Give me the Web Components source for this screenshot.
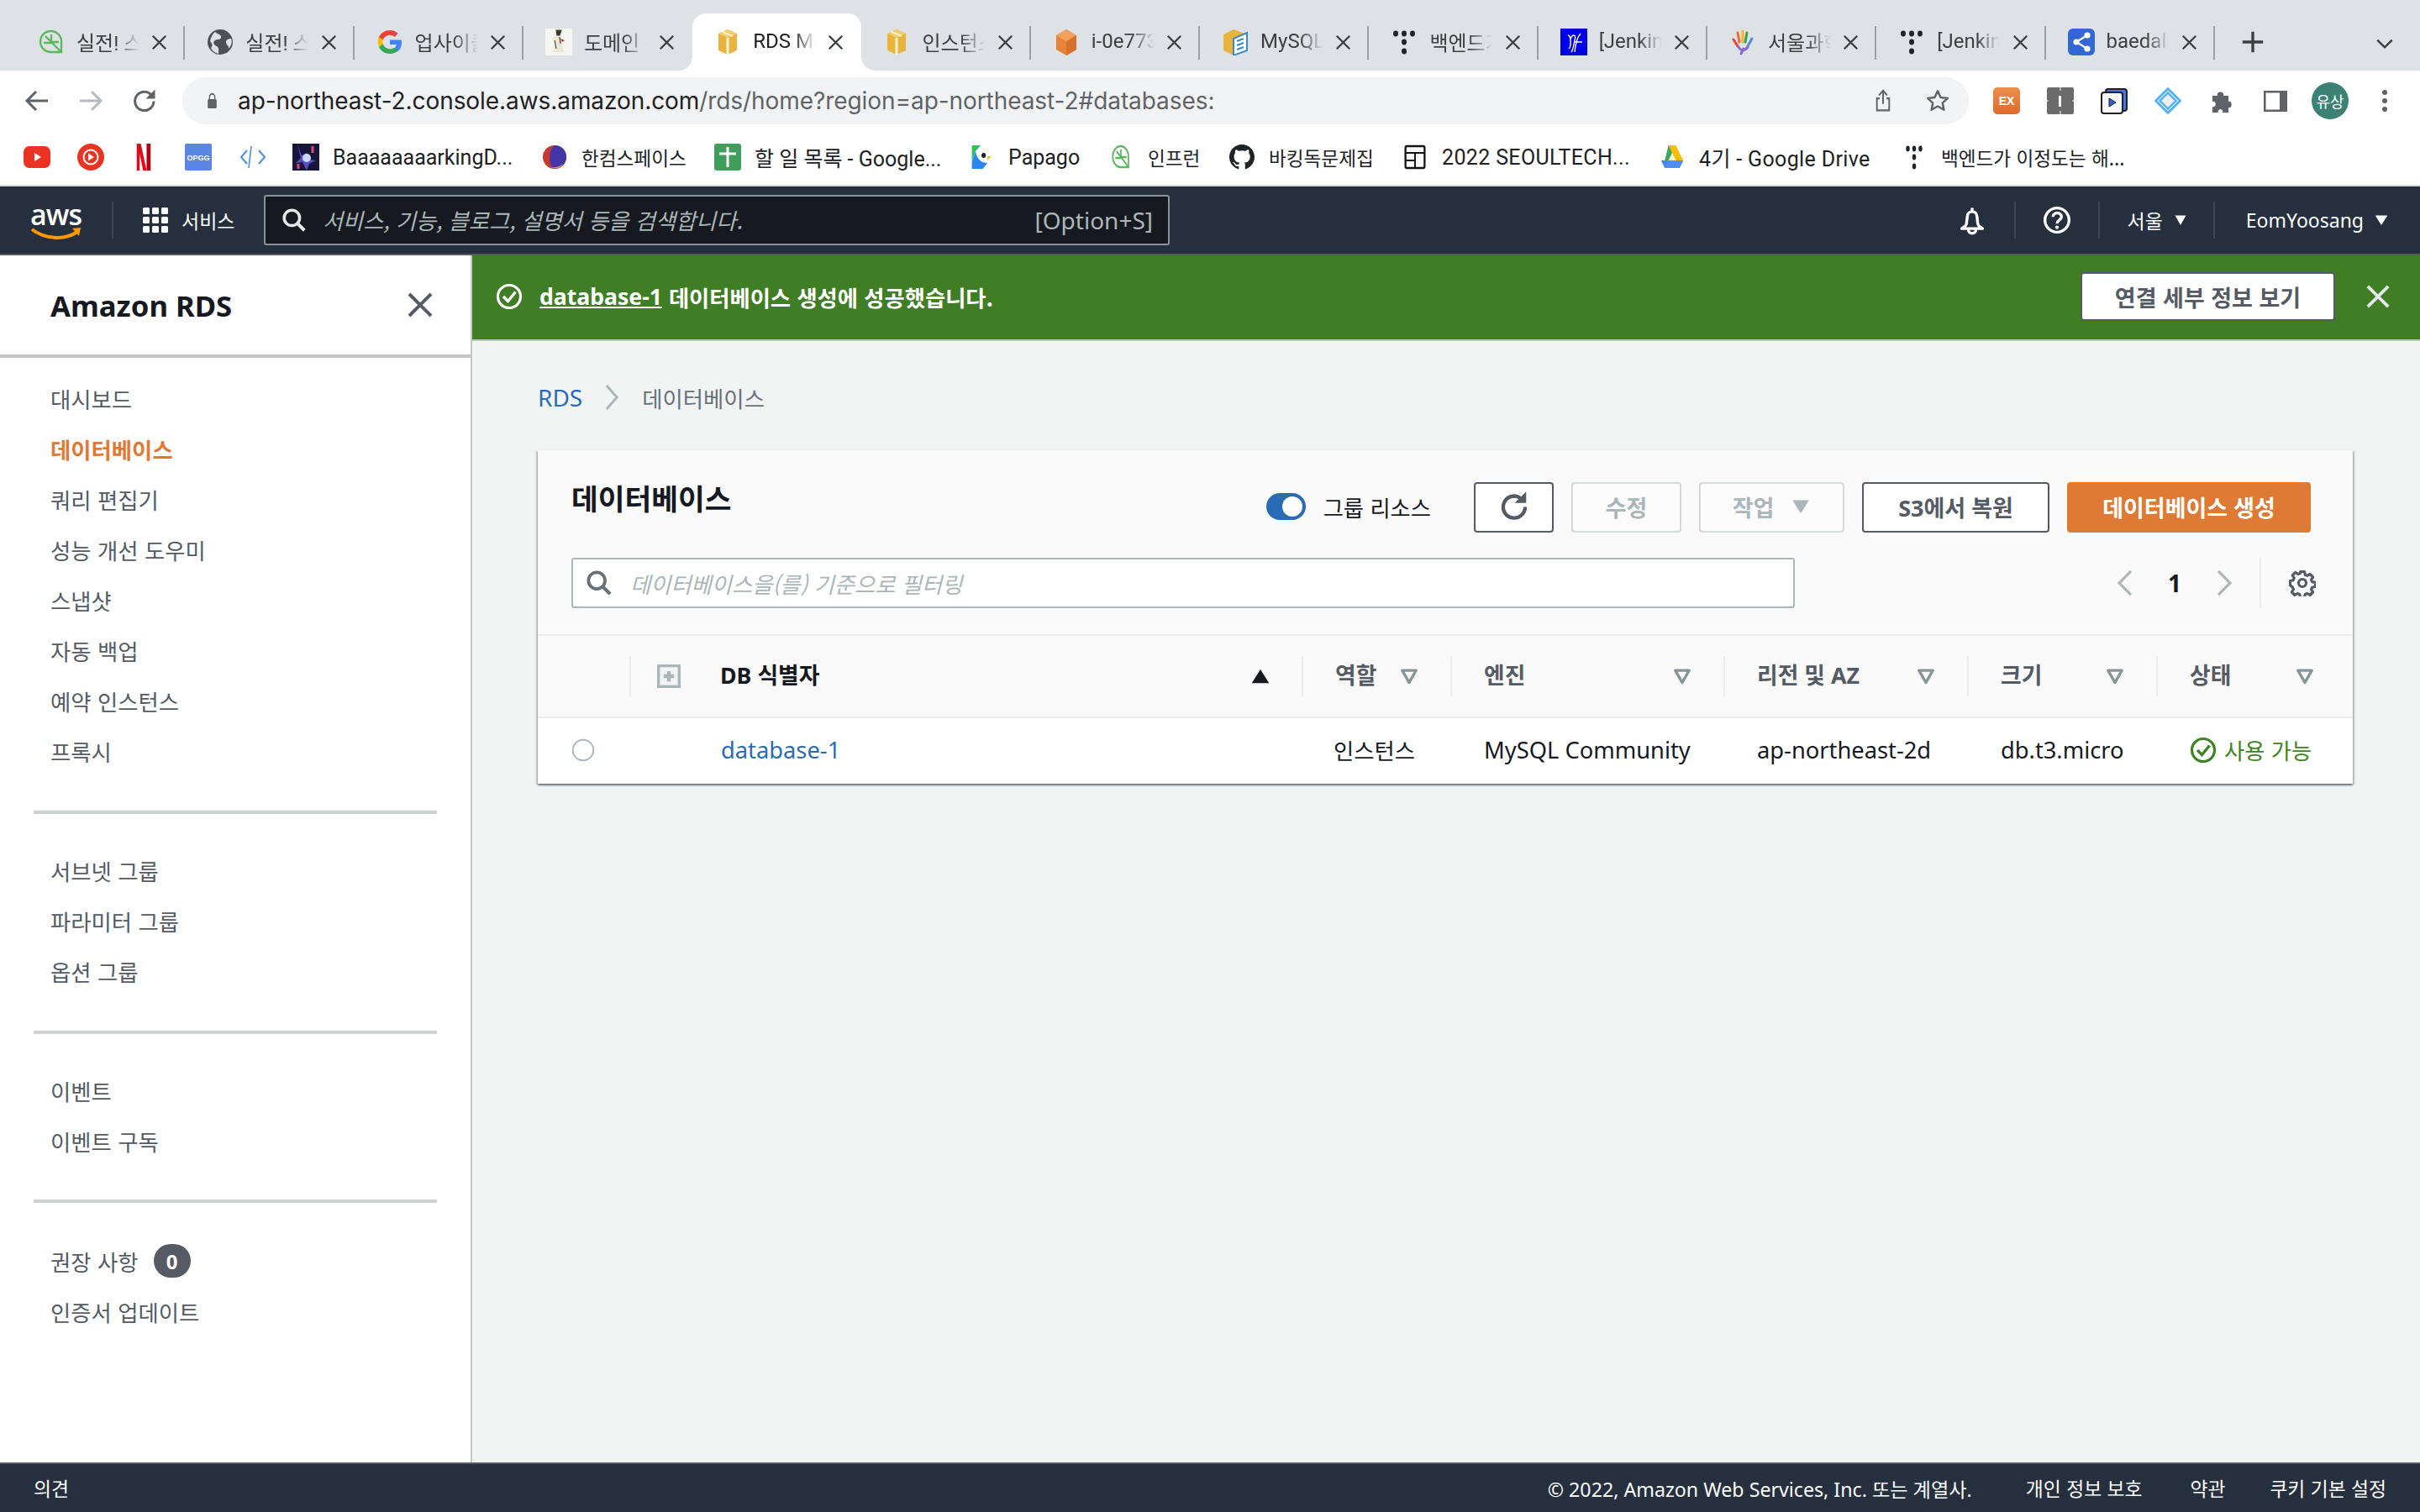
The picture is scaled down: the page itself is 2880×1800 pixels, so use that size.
<!DOCTYPE html>
<html lang="ko"><head><meta charset="utf-8"><title>RDS Management Console</title>
<style>
html,body{margin:0;padding:0;background:#f2f3f3}
body{width:2880px;height:1800px;overflow:hidden;display:flex;flex-direction:column;font-family:"Noto Sans","Noto Sans CJK KR",sans-serif;color:#16191f}
.body{display:flex;flex:1;min-height:0}
</style></head>
<body>
<chrome-tabs></chrome-tabs>
<chrome-toolbar></chrome-toolbar>
<bookmark-bar></bookmark-bar>
<aws-topnav></aws-topnav>
<div class="body">
  <side-nav></side-nav>
  <main-pane></main-pane>
</div>
<aws-footer></aws-footer>
<script>
const ICONS={
inflearn:'<g fill="none" stroke="#5cb85c" stroke-width="2.300"><path d="M28 28H16A12.500 12.500 0 1 1 28 16z"/><path d="M9 9l19 19M16 7v9M7 17h10M16 16h9"/></g>',
globe:'<circle cx="16" cy="16" r="15" fill="#4d5156"/><path d="M10 4c3 3 8 3 7 7-1 3-6 1-8 4-2 2 0 5 3 6 3 2 2 5 2 9-4-1-7-3-9-7 3-3 1-6-1-8 1-5 3-9 6-11zM29 12c-3 0-6 1-6 4 0 4 4 4 3 8 3-3 5-8 3-12z" fill="#dee1e6"/>',
g:'<path d="M30 16.400c0-1-.1-2-.3-2.900H16v5.500h7.900c-.3 1.800-1.400 3.400-2.900 4.400v3.600h4.700c2.800-2.600 4.300-6.300 4.300-10.600z" fill="#4285f4"/><path d="M16 30c3.900 0 7.200-1.300 9.700-3.500L21 22.900c-1.300.9-3 1.400-5 1.400-3.800 0-7-2.500-8.200-6H3v3.700C5.400 26.900 10.300 30 16 30z" fill="#34a853"/><path d="M7.800 18.300c-.6-1.800-.6-3.800 0-5.600V9H3C1.400 12.300 1.400 17 3 22z" fill="#fbbc05"/><path d="M16 7.700c2.100 0 4 .7 5.500 2.200l4.100-4.100C23.200 3.400 19.900 2 16 2 10.300 2 5.400 5.100 3 9.900l4.800 3.700C9 10.200 12.200 7.700 16 7.700z" fill="#ea4335"/>',
thumb:'<rect x="0" width="32" height="32" fill="#f7f5ef"/><path d="M15 3c3 0 4 3 2 5l2 4 4 2-4 1 1 8 3 5H9l3-6-1-8-3-2 5-3-1-3z" fill="#ece6d4"/><path d="M13 2h6l-2 6h-3zM11 14l2 10M17 10l1 8" stroke="#444" stroke-width="1.200" fill="#333"/><path d="M18 12l5 2-3 2z" fill="#b33"/>',
boxy:'<path d="M16 1 5 6v20l11 5 11-5V6z" fill="#e8b33e"/><path d="M5 6l11 5 11-5-11-5z" fill="#f2cc6e"/><path d="M16 11v20" stroke="#fff3cf" stroke-width="3"/><path d="M10 4l12 5" stroke="#fff3cf" stroke-width="2"/>',
boxo:'<path d="M16 1 4 8v17l12 7 12-7V8z" fill="#e8833a"/><path d="M4 8l12 7 12-7-12-7z" fill="#f0a25f"/><path d="M16 15v17l12-7V8z" fill="#d8702a"/>',
mysqlbox:'<path d="M14 1 2 7v19l12 6 4-2V10l10-4z" fill="#e8b33e"/><path d="M14 12l16-7v21l-16 6z" fill="#fff" stroke="#3a8dc9" stroke-width="2"/><path d="M18 15l8-3M18 20l8-3M18 25l8-3" stroke="#3a8dc9" stroke-width="2.400"/>',
dots:'<g fill="#1f2226"><ellipse cx="6" cy="6" rx="3" ry="3.400"/><ellipse cx="16" cy="6" rx="3" ry="3.400"/><ellipse cx="26" cy="6" rx="3" ry="3.400"/><ellipse cx="16" cy="16" rx="3" ry="3.400"/><ellipse cx="16" cy="27" rx="3" ry="3.400"/></g>',
jenk:'<rect width="32" height="32" fill="#0000e6"/><path d="M9 8c4 0 4 14 1 16M12 12c3-6 7-5 5 2-1 5-2 12-4 14M24 6c-4 4-6 12-7 22M16 16h10" fill="none" stroke="#fff" stroke-width="1.400"/>',
hand:'<g fill="none" stroke-width="3" stroke-linecap="round"><path d="M16 3v13" stroke="#f2b632"/><path d="M21 5l-2 11" stroke="#43a047"/><path d="M10 5l2 11" stroke="#ef6c3a"/><path d="M5 13l5 8" stroke="#ea4335"/><path d="M27 12l-5 9" stroke="#4a90d9"/><path d="M11 22c3 5 7 5 11 0" stroke="#8e6ad8"/><path d="M14 30l3-6" stroke="#8e6ad8"/></g>',
share:'<rect width="32" height="32" rx="6" fill="#3367d6"/><g fill="#fff"><circle cx="23" cy="8" r="3.600"/><circle cx="10" cy="16" r="3.600"/><circle cx="23" cy="24" r="3.600"/></g><path d="M23 8 10 16l13 8" stroke="#fff" stroke-width="2.200" fill="none"/>',
back:'<path d="M29 16H5M15 5 4 16l11 11" fill="none" stroke="currentColor" stroke-width="3"/>',
fwd:'<path d="M3 16h24M17 5l11 11-11 11" fill="none" stroke="currentColor" stroke-width="3"/>',
reload:'<path d="M27 16.500A11.200 11.200 0 1 1 23 7.800L27 12" fill="none" stroke="currentColor" stroke-width="3"/><path d="M28.500 2.500v11h-11z" fill="currentColor"/>',
lock:'<path d="M10 14v-4a6 6 0 0 1 12 0v4" fill="none" stroke="currentColor" stroke-width="2.600"/><rect x="6" y="13" width="20" height="16" rx="2.500" fill="currentColor"/>',
upload:'<path d="M16 20V4M10 9l6-6 6 6" fill="none" stroke="currentColor" stroke-width="2.400"/><path d="M11 13H7v15h18V13h-4" fill="none" stroke="currentColor" stroke-width="2.400"/>',
star:'<path d="M16 3.500l3.800 8.200 8.900 1-6.600 6 1.800 8.800-7.900-4.500-7.900 4.500 1.800-8.800-6.600-6 8.900-1z" fill="none" stroke="currentColor" stroke-width="2.600" stroke-linejoin="round"/>',
ex:'<defs><linearGradient id="exg" x1="0" y1="0" x2="0" y2="1"><stop offset="0" stop-color="#ec8f4d"/><stop offset="1" stop-color="#df6a2b"/></linearGradient></defs><rect width="32" height="32" rx="5" fill="url(#exg)"/><text x="16" y="21" font-family="Liberation Sans" font-size="14" font-weight="700" fill="#fff" text-anchor="middle">EX</text>',
grey:'<rect width="32" height="32" rx="2" fill="#6b6b6b"/><path d="M16 0v4M16 28v4M0 16h2M30 16h2" stroke="#fff" stroke-width="1"/><path d="M15.500 10v13" stroke="#fff" stroke-width="3"/>',
play:'<rect x="6" y="2" width="25" height="26" rx="3" fill="#4a76e0" stroke="#202124" stroke-width="2"/><rect x="1" y="6" width="25" height="25" rx="3" fill="#f7f7f7" stroke="#202124" stroke-width="2"/><path d="M10 13v10l8-5z" fill="#2f62d6" stroke="#202124" stroke-width="1"/>',
diamond:'<path d="M16 1.500 30.500 16 16 30.500 1.500 16z" fill="none" stroke="#4db2f5" stroke-width="2.600" stroke-linejoin="round"/><path d="M16 6.500 25.500 16 16 25.500 6.500 16z" fill="#eeeeee" stroke="#4db2f5" stroke-width="2.400"/>',
puzzle:'<path d="M5 10h6c-2-6 9-6 7 0h6v7c5-2 5 9 0 7v6h-7c2-5-7-5-5 0H5v-7c5 2 5-8 0-6z" fill="#5f6368"/>',
panel:'<rect x="2" y="4" width="28" height="25" fill="#5f6368"/><rect x="4.500" y="6.500" width="16.500" height="20" fill="#fff"/>',
vdots:'<g fill="#5f6368"><circle cx="16" cy="6" r="3"/><circle cx="16" cy="16" r="3"/><circle cx="16" cy="26" r="3"/></g>',
plus:'<path d="M16 3v26M3 16h26" stroke="#3c4043" stroke-width="3.600"/>',
chevd:'<path d="M6 11l10 10 10-10" fill="none" stroke="#3c4043" stroke-width="2.800"/>',
x:'<path d="M3 3l26 26M29 3 3 29" stroke="currentColor" stroke-width="4" fill="none"/>',
yt:'<rect y="3" width="32" height="26" rx="7" fill="#ea3323"/><path d="M13 11v10l8-5z" fill="#fff"/>',
ytm:'<circle cx="16" cy="16" r="16" fill="#ea3323"/><circle cx="16" cy="16" r="8.500" fill="none" stroke="#fff" stroke-width="2"/><path d="M13 11.500v9l7-4.500z" fill="#fff"/>',
netflix:'<path d="M4 0h7l10 32h-6L9 12v20H4z" fill="#e50914"/><path d="M21 0h7v32h-7z" fill="#b20710"/>',
opgg:'<rect width="32" height="32" rx="2" fill="#5b86e5"/><text x="16" y="20" font-family="Liberation Sans" font-size="9" font-weight="700" fill="#fff" text-anchor="middle">OPGG</text>',
code:'<path d="M9 8l-7 8 7 8M23 8l7 8-7 8" fill="none" stroke="#4c8fd6" stroke-width="2"/><path d="M14 3 11 29" stroke="#4c8fd6" stroke-width="1.600"/>',
art:'<rect width="32" height="32" fill="#17153a"/><path d="M6 2l5 12 6-3 4 8 7 1-8 4-3 8-5-10-8 1 6-6z" fill="#5a4cc0"/><circle cx="17" cy="17" r="5" fill="#c9d8ff"/><path d="M24 3v8M7 24v6" stroke="#e0457a" stroke-width="3"/>',
hancom:'<circle cx="16" cy="16" r="14" fill="#c9382e"/><path d="M16 2a14 14 0 0 1 0 28C8 26 8 8 16 2z" fill="#4435a8"/><path d="M12 28c6 3 12 1 14-4-4 4-9 5-14 4z" fill="#f2a33a"/>',
task:'<rect width="32" height="32" rx="3" fill="#3f9e5a"/><path d="M16 4v24M6 12h20" stroke="#fff" stroke-width="3"/>',
papago:'<path d="M3 3h15c8 0 12 6 12 13 0 8-5 13-12 13H3z" fill="#fff"/><path d="M3 2h12L8 9 3 22z" fill="#2fc25b"/><path d="M3 22l5-13c2 10 8 14 16 14l-6 7H3z" fill="#2a86f0"/><circle cx="19" cy="14" r="3" fill="#222"/><path d="M24 15h6l-6 5z" fill="#f5c33a"/>',
github:'<path d="M16 1C7.700 1 1 7.700 1 16c0 6.600 4.300 12.200 10.300 14.200.7.100 1-.3 1-.7v-2.700c-4.200.9-5-1.800-5-1.800-.7-1.700-1.700-2.200-1.700-2.200-1.400-.9.100-.9.100-.9 1.500.1 2.300 1.500 2.300 1.500 1.300 2.300 3.500 1.600 4.400 1.200.1-1 .5-1.600 1-2-3.300-.4-6.800-1.700-6.800-7.400 0-1.600.6-3 1.500-4-.1-.4-.7-1.900.2-4 0 0 1.300-.4 4.100 1.500a14 14 0 0 1 7.500 0c2.900-1.900 4.100-1.500 4.100-1.500.8 2.100.3 3.600.1 4 1 1 1.600 2.400 1.600 4 0 5.800-3.500 7-6.900 7.400.5.500 1 1.400 1 2.800v4.200c0 .4.300.9 1 .7C26.700 28.200 31 22.600 31 16 31 7.700 24.300 1 16 1z" fill="#1f2226"/>',
table:'<rect x="3" y="3" width="26" height="26" rx="2" fill="none" stroke="#111" stroke-width="2.600"/><path d="M3 11h26M16 11v18M3 20h13" stroke="#111" stroke-width="2.200" fill="none"/>',
drive:'<path d="M11 2h10l-10 18-5-.1z" fill="#3aa757"/><path d="M21 2l10 18H21L11 2z" fill="#fbbc05"/><path d="M1 20h30l-5 9H6z" fill="#4285f4"/><path d="M11 20h20l-5 9H6z" fill="#4d8ff5"/>',
bell:'<path d="M16 3v3M9 22c2-3 1-6 2-10a5 5 0 0 1 10 0c1 4 0 7 2 10l4 3H5zM12 26a4 4 0 0 0 8 0" fill="none" stroke="currentColor" stroke-width="3" stroke-linejoin="round"/>',
help:'<circle cx="16" cy="16" r="13.500" fill="none" stroke="currentColor" stroke-width="3.200"/><path d="M11.500 12.500c0-6 9.500-6 9.500 0 0 3.500-5 3.500-5 7.500" fill="none" stroke="currentColor" stroke-width="3.200"/><circle cx="16" cy="24" r="2" fill="currentColor"/>',
caret:'<path d="M3 5h26L16 28z" fill="currentColor"/>',
grid:'<g fill="#fff">'+[0,1,2].map(y=>[0,1,2].map(x=>`<rect x="${x*11+1}" y="${y*11+1}" width="8" height="8" rx="1.500"/>`).join('')).join('')+'</g>',
search:'<circle cx="13" cy="13" r="10.500" fill="none" stroke="currentColor" stroke-width="4"/><path d="M20.500 20.500 30 30" stroke="currentColor" stroke-width="4.500"/>',
okc:'<circle cx="16" cy="16" r="13.500" fill="none" stroke="currentColor" stroke-width="3.200"/><path d="M9 16l5.500 5.500 9-11" fill="none" stroke="currentColor" stroke-width="3.400"/>',
chevr:'<path d="M5 1l22 15L5 31" fill="none" stroke="currentColor" stroke-width="4"/>',
chevl:'<path d="M27 1 5 16l22 15" fill="none" stroke="currentColor" stroke-width="4"/>',
refresh:'<path d="M27 16.500A11 11 0 1 1 22 7.300" fill="none" stroke="currentColor" stroke-width="3.600"/><path d="M28 1v11.500H16.500z" fill="currentColor"/>',
gear:'<path d="M13.500 3h5l.8 3.800 2.500 1 3.300-2 3.500 3.500-2 3.300 1 2.500 3.800.8v5l-3.800.8-1 2.500 2 3.300-3.500 3.500-3.300-2-2.500 1-.8 3.800h-5l-.8-3.800-2.500-1-3.300 2-3.500-3.500 2-3.300-1-2.500L1.400 19v-5l3.800-.8 1-2.500-2-3.300 3.500-3.500 3.300 2 2.500-1z" transform="translate(0 -.500)" fill="none" stroke="currentColor" stroke-width="3.200" stroke-linejoin="round"/><circle cx="16" cy="16" r="4.500" fill="none" stroke="currentColor" stroke-width="3.200"/>',
expand:'<rect x="2" y="2" width="28" height="28" fill="none" stroke="#aab7b8" stroke-width="4.500"/><rect x="4" y="4" width="24" height="24" fill="#f2f3f3"/><path d="M16 9v14M9 16h14" stroke="#aab7b8" stroke-width="5"/>',
tri:'<path d="M4 5h24L16 28z" fill="none" stroke="currentColor" stroke-width="5" stroke-linejoin="round"/>',
up:'<path d="M16 3 31 29H1z" fill="currentColor"/>',
radio:'<circle cx="16" cy="16" r="14" fill="#fff" stroke="#aab7b8" stroke-width="2.200"/>'
};
class XIcon extends HTMLElement{connectedCallback(){
  const s=this.getAttribute('s')||32,w=this.getAttribute('w')||s,c=this.getAttribute('c')||'currentColor';
  this.shadowRoot||this.attachShadow({mode:'open'});
  this.shadowRoot.innerHTML=`<style>:host{display:inline-flex;flex:none;width:${w}px;height:${s}px;color:${c}}svg{display:block;width:100%;height:100%}</style><svg viewBox="0 0 32 32" preserveAspectRatio="none">${ICONS[this.getAttribute('n')]||''}</svg>`;
}}
customElements.define('x-icon',XIcon);
function def(tag,fn){customElements.define(tag,class extends HTMLElement{connectedCallback(){
  if(!this.shadowRoot)this.attachShadow({mode:'open'}).innerHTML=fn(this);
}});}
const UI='"Roboto","Noto Sans CJK KR",sans-serif';
const AWS='"Noto Sans","Noto Sans CJK KR",sans-serif';
const KO='"Noto Sans CJK KR",sans-serif';

def('chrome-tab',h=>{const a=h.hasAttribute('active');return `<style>
:host{display:flex;flex:none;width:201.300px;height:68px;position:relative;align-items:center;box-sizing:border-box;padding:0 21px 0 26px;font:24px ${UI};color:#3c4043}
:host([active]){background:#fff;border-radius:16px 16px 0 0;color:#202124}
:host(:not([active]):not([nosep]))::after{content:"";position:absolute;right:0;top:15px;height:40px;width:2px;background:#9aa0a6}
.fl{position:absolute;bottom:0;width:16px;height:16px}
.l{left:-16px;background:radial-gradient(circle at 0 0,#dee1e6 15.500px,#fff 16px)}
.r{right:-16px;background:radial-gradient(circle at 100% 0,#dee1e6 15.500px,#fff 16px)}
.t{width:78px;margin-left:14px;margin-top:-2px;white-space:nowrap;overflow:hidden;-webkit-mask-image:linear-gradient(90deg,#000 60%,transparent 96%);mask-image:linear-gradient(90deg,#000 60%,transparent 96%)}
x-icon.c{margin-left:auto}
</style>${a?'<i class="fl l"></i><i class="fl r"></i>':''}<x-icon n="${h.getAttribute('i')}" s="32"></x-icon><span class="t"><slot></slot></span><x-icon class="c" n="x" s="19" c="#3c4043"></x-icon>`});

def('chrome-tabs',()=>`<style>
:host{display:flex;height:84px;background:#dee1e6;box-sizing:border-box;padding:16px 0 0 19px;flex:none;align-items:flex-start}
.a{margin:19px 0 0 30px}.b{margin:22px 0 0 auto;margin-right:28px}
</style>
<chrome-tab i="inflearn">실전! 스프링</chrome-tab><chrome-tab i="globe">실전! 스프링</chrome-tab><chrome-tab i="g">업사이클링</chrome-tab><chrome-tab i="thumb" nosep>도메인 관리</chrome-tab><chrome-tab i="boxy" active>RDS Management</chrome-tab><chrome-tab i="boxy">인스턴스</chrome-tab><chrome-tab i="boxo">i-0e7731</chrome-tab><chrome-tab i="mysqlbox">MySQL</chrome-tab><chrome-tab i="dots">백엔드가</chrome-tab><chrome-tab i="jenk">[Jenkins]</chrome-tab><chrome-tab i="hand">서울과학기술</chrome-tab><chrome-tab i="dots">[Jenkins]</chrome-tab><chrome-tab i="share">baedal</chrome-tab>
<x-icon class="a" n="plus" s="30"></x-icon><x-icon class="b" n="chevd" s="28"></x-icon>`);

def('chrome-toolbar',()=>`<style>
:host{display:flex;height:72px;background:#fff;align-items:center;flex:none;padding-left:28px;box-sizing:border-box}
.url{display:flex;align-items:center;width:2126px;height:56px;margin-left:29px;background:#f1f3f4;border-radius:28px;box-sizing:border-box;padding:0 22px 0 27px;font:28px "Inter",sans-serif;color:#5f6368}
.url b{font-weight:400;color:#202124}
.u{margin-left:22px;white-space:nowrap;flex:1;letter-spacing:-.07px}
.ext{display:flex;align-items:center;margin-left:29px}
.ext x-icon{margin-right:32px}
</style>
<x-icon n="back" s="32" c="#5f6368"></x-icon><x-icon n="fwd" s="32" c="#b6b9bd" style="margin-left:32px"></x-icon><x-icon n="reload" s="32" c="#5f6368" style="margin-left:32px"></x-icon>
<div class="url"><x-icon n="lock" s="22" w="17" c="#5f6368"></x-icon><span class="u"><b>ap-northeast-2.console.aws.amazon.com</b>/rds/home?region=ap-northeast-2#databases:</span><x-icon n="upload" s="30" w="26" c="#5f6368"></x-icon><x-icon n="star" s="30" c="#5f6368" style="margin-left:37px"></x-icon></div>
<div class="ext"><x-icon n="ex"></x-icon><x-icon n="grey"></x-icon><x-icon n="play"></x-icon><x-icon n="diamond"></x-icon><x-icon n="puzzle"></x-icon><x-icon n="panel"></x-icon><x-avatar>유상</x-avatar><x-icon n="vdots" style="margin:0 0 0 27px"></x-icon></div>`);

def('x-avatar',()=>`<style>:host{display:flex;width:44px;height:44px;border-radius:50%;background:#3b8274;color:#fff;font:18px ${KO};align-items:center;justify-content:center;margin-left:-5px}</style><slot></slot>`);

def('b-mark',h=>`<style>:host{display:flex;flex:none;align-items:center;width:${h.getAttribute('w')}px;font:25px ${UI};color:#202124;white-space:nowrap}
:host([ko]){font:22.600px ${KO}}
:host([ls]){letter-spacing:.35px}
span{margin-left:${h.getAttribute('g')||16}px}</style><x-icon n="${h.getAttribute('i')}" s="32" w="${h.getAttribute('iw')||32}"></x-icon><span><slot></slot></span>`);

def('bookmark-bar',()=>`<style>:host{display:flex;flex:none;height:66px;background:#fff;border-bottom:2px solid #dadce0;box-sizing:border-box;align-items:center;padding:0 0 2px 28px}</style>
<b-mark i="yt" w="64"></b-mark><b-mark i="ytm" w="68"></b-mark><b-mark i="netflix" iw="22" w="60"></b-mark><b-mark i="opgg" w="65"></b-mark><b-mark i="code" w="63"></b-mark>
<b-mark i="art" w="296">BaaaaaaaarkingD...</b-mark><b-mark ko i="hancom" w="206">한컴스페이스</b-mark><b-mark i="task" w="304">할 일 목록 - Google...</b-mark><b-mark i="papago" iw="28" g="18" w="168">Papago</b-mark><b-mark ko i="inflearn" iw="24" g="20" w="140">인프런</b-mark><b-mark ko i="github" w="208">바킹독문제집</b-mark><b-mark ls i="table" w="306" g="18" iw="28">2022 SEOULTECH...</b-mark><b-mark ls i="drive" iw="28" g="18" w="290">4기 - Google Drive</b-mark><b-mark ko i="dots" iw="24" g="20">백엔드가 이정도는 해...</b-mark>`);

def('aws-topnav',()=>`<style>
:host{display:flex;flex:none;height:82px;background:#252f3e;border-bottom:2px solid #545b64;box-sizing:border-box;align-items:center;color:#fff;font:24px ${AWS}}
.logo{width:62px;margin-left:36px;height:60px;position:relative;flex:none}
.logo b{display:block;font:600 34px/1 "Open Sans",sans-serif;letter-spacing:-1px;position:absolute;left:0;top:6px;color:#fff}
.logo svg{position:absolute;left:0;top:38px;width:62px;height:22px}
.sep{width:2px;height:44px;background:#414750;flex:none}
.svc{margin-left:15px;width:65px;font:23px ${KO};white-space:nowrap}
.sb{display:flex;align-items:center;width:1078px;height:60px;box-sizing:border-box;margin-left:33px;background:#16191f;border:2px solid #879596;border-radius:3px;padding:0 18px 0 20px;color:#aab7b8}
.sb i{font:italic 26.200px ${KO};margin-left:20px;flex:1;color:#aab7b8}
.sb span{font-size:28px;color:#aab7b8}
.r{margin-left:auto;display:flex;align-items:center;height:44px}
.c{display:flex;align-items:center;height:44px;justify-content:center}
.k{font:23px ${KO}}
</style>
<div class="logo"><b>aws</b><svg viewBox="0 0 62 22"><path d="M2 3c14 11 38 14 54 3" fill="none" stroke="#f90" stroke-width="4"/><path d="M50 2l10-1-2 10z" fill="#f90"/></svg></div>
<span class="sep" style="margin-left:35px"></span><x-icon n="grid" s="32" style="margin-left:34px"></x-icon><span class="svc">서비스</span>
<div class="sb"><x-icon n="search" s="28" c="#e5e9ea"></x-icon><i>서비스, 기능, 블로그, 설명서 등을 검색합니다.</i><span>[Option+S]</span></div>
<div class="r">
<x-icon n="bell" s="36" style="margin-right:32px"></x-icon><span class="sep"></span>
<x-icon n="help" s="34" style="margin:0 32px"></x-icon><span class="sep"></span>
<div class="c k" style="padding:0 31px 0 32px">서울<x-icon n="caret" s="16" w="16" style="margin-left:13px"></x-icon></div><span class="sep"></span>
<div class="c" style="padding:0 37px 0 37px;font-size:23px">EomYoosang<x-icon n="caret" s="16" w="18" style="margin-left:12px"></x-icon></div>
</div>`);

def('nav-item',h=>`<style>:host{display:flex;align-items:center;height:60px;padding-left:60px;font:26.400px ${KO};color:#545b64}
:host([on]){color:#df7a34;font-weight:700}
.b{display:flex;margin-left:18px;width:44px;height:40px;border-radius:20px;background:#545b64;color:#fff;font:700 24px ${AWS};align-items:center;justify-content:center}</style><slot></slot>${h.hasAttribute('badge')?`<span class="b">${h.getAttribute('badge')}</span>`:''}`);

def('side-nav',()=>`<style>
:host{display:block;flex:none;width:562px;background:#fff;border-right:2px solid #c6c6c6;box-sizing:border-box}
header{display:flex;align-items:center;justify-content:space-between;height:122px;box-sizing:border-box;padding:0 44px 0 60px;border-bottom:4px solid #c6c6c6}
h2{margin:0;font:700 34.700px ${AWS};color:#16191f}
.list{padding-top:18px}
.sp{margin:41px 40px 37px;height:4px;background:#cfd2d2}
.sp.e{margin:40px 40px 39px}
</style>
<header><h2>Amazon RDS</h2><x-icon n="x" s="32" c="#545b64"></x-icon></header>
<div class="list">
<nav-item>대시보드</nav-item><nav-item on>데이터베이스</nav-item><nav-item>쿼리 편집기</nav-item><nav-item>성능 개선 도우미</nav-item><nav-item>스냅샷</nav-item><nav-item>자동 백업</nav-item><nav-item>예약 인스턴스</nav-item><nav-item>프록시</nav-item>
<div class="sp"></div>
<nav-item>서브넷 그룹</nav-item><nav-item>파라미터 그룹</nav-item><nav-item>옵션 그룹</nav-item>
<div class="sp"></div>
<nav-item>이벤트</nav-item><nav-item>이벤트 구독</nav-item>
<div class="sp e"></div>
<nav-item badge="0">권장 사항</nav-item><nav-item>인증서 업데이트</nav-item>
</div>`);

def('flash-bar',()=>`<style>
:host{display:flex;align-items:center;flex:none;height:100px;background:#3f7e25;color:#fff;box-sizing:border-box;padding:0 0 2px 28px;box-shadow:0 2px 0 #bfc4c4;font:700 26.300px ${KO}}
a{color:#fff;text-decoration:underline;font:700 26.600px ${AWS};margin-left:20px;margin-right:8px}
.btn{margin-left:auto;width:303px;height:58px;box-sizing:border-box;background:#fff;border:2px solid #545b64;color:#545b64;border-radius:4px;display:flex;align-items:center;justify-content:center;font-size:27px}
</style><x-icon n="okc" s="32"></x-icon><a>database-1</a><span>데이터베이스 생성에 성공했습니다.</span><div class="btn">연결 세부 정보 보기</div><x-icon n="x" s="30" c="#e5e9e9" style="margin:0 35px 0 36px"></x-icon>`);

def('crumb-bar',()=>`<style>:host{display:flex;align-items:center;flex:none;height:30px;margin:54px 0 48px 78px;font:26.400px ${KO};color:#687078}
a{color:#2a6bb5;font:28px ${AWS}}</style><a>RDS</a><x-icon n="chevr" s="30" w="18" c="#aab7b8" style="margin:0 27px 0 26px"></x-icon><span>데이터베이스</span>`);

def('aws-btn',h=>`<style>
:host{display:flex;flex:none;align-items:center;justify-content:center;height:60px;box-sizing:border-box;border-radius:4px;border:2px solid #545b64;background:#fff;color:#545b64;font:700 27px ${AWS};padding-bottom:2px}
:host([v=d]){border-color:#d5dbdb;color:#aab7b8;background:#fcfcfc}
:host([v=p]){border-color:#df7a34;background:#df7a34;color:#fff}
</style><slot></slot>`);

def('th-cell',h=>`<style>:host{display:flex;position:relative;align-items:center;box-sizing:border-box;padding:0 38px 0 40px;font:700 26.800px ${AWS};color:#545b64}
:host::before{content:"";position:absolute;left:0;top:24px;bottom:24px;width:2px;background:#eaeded}
:host([first]){color:#16191f;padding-left:33px}
span{margin-top:-5px}
x-icon.t{margin-left:auto}</style>${h.hasAttribute('first')?'<x-icon n="expand" s="28" style="margin-right:47px"></x-icon>':''}<span><slot></slot></span>${h.hasAttribute('first')?'<x-icon class="t" n="up" s="20" w="22" c="#16191f"></x-icon>':'<x-icon class="t" n="tri" s="20" w="22" c="#879596"></x-icon>'}`);

def('db-card',()=>`<style>
:host{display:block;flex:none;margin:0 80px 0 78px;background:#fafafa;box-shadow:0 2px 2px rgba(0,28,36,.45),2px 1px 2px rgba(0,28,36,.2),-2px 1px 2px rgba(0,28,36,.2)}
.r1{display:flex;align-items:flex-start;padding:38px 50px 0 40px;height:60px}
h2{margin:-6px 0 0;font:700 34.500px/1.4 ${KO};color:#16191f}
.act{margin-left:auto;display:flex;align-items:center;gap:21px}
.tg{display:flex;align-items:center;font:26.300px ${KO};color:#16191f;margin:-2px 30px 0 0}
.sw{width:47px;height:32px;border-radius:16px;background:#2a6bb5;position:relative;margin-right:21px}
.sw i{position:absolute;right:4px;top:4px;width:24px;height:24px;border-radius:50%;background:#fff}
.r2{display:flex;align-items:center;padding:30px 44px 31px 40px;height:60px;border-bottom:2px solid #eaeded}
.fl{display:flex;align-items:center;width:1456px;height:60px;box-sizing:border-box;background:#fff;border:2px solid #aab7b8;border-radius:3px;padding:0 16px;color:#687078}
.fl i{font:italic 26.300px ${KO};color:#aab7b8;margin-left:22px}
.pg{margin-left:auto;display:flex;align-items:center;height:60px}
.n{font:700 28px ${AWS};color:#16191f;margin:0 41px}
.dv{width:2px;height:60px;background:#eaeded;margin:0 33px 0 32px}
.grid{display:grid;grid-template-columns:109px 800px 177px 325px 290px 225px 226px 8px}
.hd{height:96px;border-bottom:2px solid #eaeded}
.rw{height:78px;background:#fff;font:27.300px ${AWS};color:#16191f;align-items:center}
.rw>*{padding-left:40px;padding-bottom:3px;white-space:nowrap;display:flex;align-items:center}
.ko{font:26.400px ${KO};padding-left:38px!important}
.rw a{color:#2a6bb5}
.st{color:#3f8424;padding-left:40px!important;font:26.300px ${KO}}
</style>
<div class="r1"><h2>데이터베이스</h2><div class="act">
<div class="tg"><span class="sw"><i></i></span>그룹 리소스</div>
<aws-btn style="width:95px"><x-icon n="refresh" s="38"></x-icon></aws-btn><aws-btn v="d" style="width:131px">수정</aws-btn><aws-btn v="d" style="width:173px">작업<x-icon n="caret" s="22" w="24" c="#aab7b8" style="margin-left:20px"></x-icon></aws-btn><aws-btn style="width:223px">S3에서 복원</aws-btn><aws-btn v="p" style="width:290px">데이터베이스 생성</aws-btn>
</div></div>
<div class="r2"><div class="fl"><x-icon n="search" s="30"></x-icon><i>데이터베이스을(를) 기준으로 필터링</i></div>
<div class="pg"><x-icon n="chevl" s="30" w="20" c="#aab7b8"></x-icon><span class="n">1</span><x-icon n="chevr" s="30" w="20" c="#aab7b8"></x-icon><span class="dv"></span><x-icon n="gear" s="32" c="#545b64"></x-icon></div></div>
<div class="grid hd"><span></span><th-cell first>DB 식별자</th-cell><th-cell>역할</th-cell><th-cell>엔진</th-cell><th-cell>리전 및 AZ</th-cell><th-cell>크기</th-cell><th-cell>상태</th-cell><span></span></div>
<div class="grid rw"><span style="padding-left:40px"><x-icon n="radio" s="28"></x-icon></span><span style="padding-left:109px"><a>database-1</a></span><span class="ko">인스턴스</span><span>MySQL Community</span><span>ap-northeast-2d</span><span>db.t3.micro</span><span class="st"><x-icon n="okc" s="32" style="margin-right:9px"></x-icon>사용 가능</span><span></span></div>`);

def('main-pane',()=>`<style>:host{display:flex;flex-direction:column;flex:1;min-width:0;background:#f2f3f3}</style><flash-bar></flash-bar><crumb-bar></crumb-bar><db-card></db-card>`);

def('aws-footer',()=>`<style>:host{display:flex;flex:none;height:59px;box-sizing:border-box;align-items:center;background:#252f3e;border-top:2px solid #545b64;color:#fff;font:23.200px ${AWS};padding:0 40px}
.r{margin-left:auto;display:flex}.k{font:22.800px ${KO}}</style><span class="k">의견</span><div class="r"><span>© 2022, Amazon Web Services, Inc. 또는 계열사.</span><span class="k" style="margin-left:64px">개인 정보 보호</span><span class="k" style="margin-left:57px">약관</span><span class="k" style="margin-left:53px">쿠키 기본 설정</span></div>`);
</script>
</body></html>
